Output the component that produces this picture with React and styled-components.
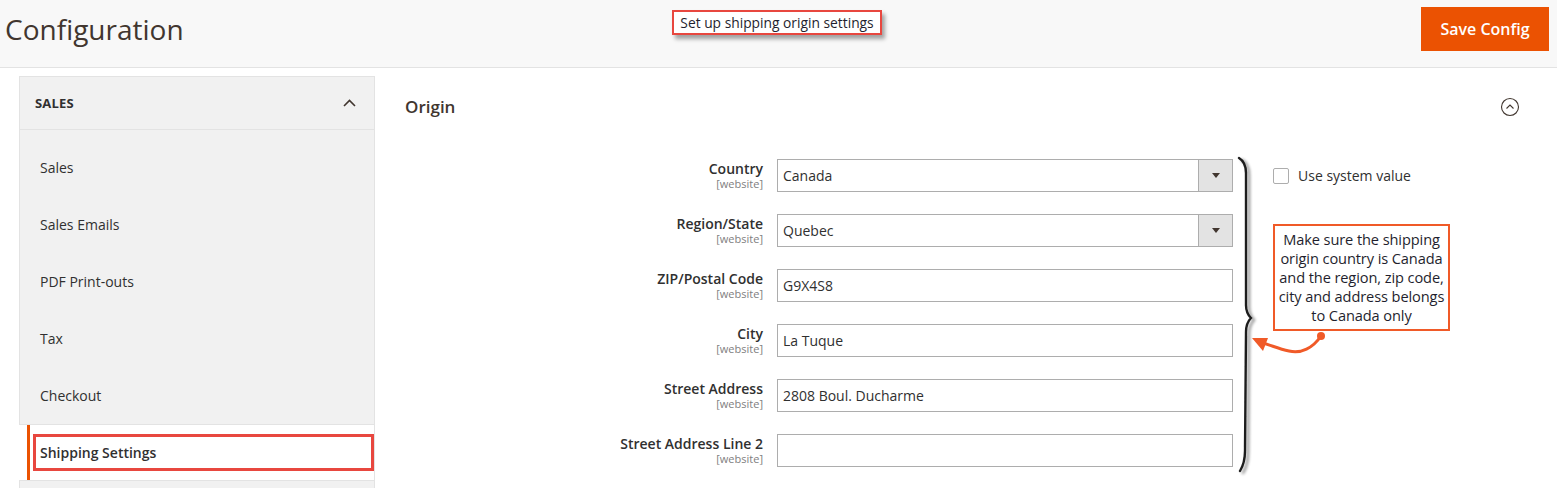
import React from "react";
import styled, { createGlobalStyle } from "styled-components";

const Global = createGlobalStyle`
  html, body { margin: 0; padding: 0; overflow: hidden; }
  body {
    font-family: "Open Sans", "Noto Sans", sans-serif;
    color: #303030;
    background: #ffffff;
  }
  #root { height: 488px; overflow: hidden; }
`;

const Header = styled.header`
  display: grid;
  grid-template-columns: 1fr auto 1fr;
  height: 67px;
  background: #f8f8f8;
  border-bottom: 1px solid #e3e3e3;
  padding: 0 8px 0 5px;
`;

const PageTitle = styled.h1`
  align-self: start;
  margin: 11px 0 0;
  font-size: 28px;
  font-weight: 400;
  color: #41362f;
  line-height: 36px;
`;

const Callout = styled.div`
  align-self: start;
  margin-top: 10px;
  background: #fff;
  border: 2.5px solid #e8473f;
  box-shadow: 3px 4px 4px rgba(0, 0, 0, 0.35);
  font-family: "Open Sans", sans-serif;
  font-size: 13.8px;
  line-height: 21px;
  color: #1f1f2e;
  padding: 0 6px;
  white-space: nowrap;
`;

const SaveButton = styled.button`
  justify-self: end;
  align-self: start;
  margin-top: 7px;
  width: 128px;
  height: 44px;
  border: none;
  background: #eb5202;
  color: #fff;
  font-family: "Open Sans", sans-serif;
  font-size: 16px;
  font-weight: 600;
  cursor: pointer;
`;

const Body = styled.div`
  display: grid;
  grid-template-columns: 356px minmax(0, 1fr);
  padding: 8px 0 0 19px;
`;

const Nav = styled.nav`
  display: flex;
  flex-direction: column;
`;

const NavTitle = styled.div`
  display: flex;
  align-items: center;
  justify-content: space-between;
  height: 52px;
  padding: 0 18px 0 15px;
  background: #f1f1f1;
  border: 1px solid #e3e3e3;
  font-size: 13px;
  font-weight: 700;
  color: #303030;
  letter-spacing: 0.2px;
`;

const NavList = styled.ul`
  list-style: none;
  margin: 0;
  padding: 9px 0 20px;
  background: #f1f1f1;
  border-left: 1px solid #e3e3e3;
  border-right: 1px solid #e3e3e3;
`;

const NavItem = styled.li`
  display: flex;
  height: ${(p) => (p.$active ? "55px" : "57px")};
  background: ${(p) => (p.$active ? "#ffffff" : "#f1f1f1")};
  margin-left: ${(p) => (p.$active ? "-1px" : "0")};
  border-top: ${(p) => (p.$active ? "1px solid #e3e3e3" : "none")};
  border-bottom: ${(p) => (p.$active ? "1px solid #e3e3e3" : "none")};
`;

const NavLink = styled.a`
  flex: 1;
  display: flex;
  align-items: center;
  margin-left: ${(p) => (p.$active ? "8px" : "7px")};
  border-left: 3px solid ${(p) => (p.$active ? "#eb5202" : "transparent")};
  padding-left: ${(p) => (p.$active ? "3px" : "10px")};
  font-size: 14px;
  font-weight: ${(p) => (p.$active ? 600 : 400)};
  color: #303030;
  text-decoration: none;
`;

const Highlight = styled.span`
  flex: 1;
  align-self: stretch;
  margin: 9px 0;
  display: flex;
  align-items: center;
  border: 3px solid #e8473f;
  padding-left: 4px;
`;

const Main = styled.main`
  padding: 0 37px 0 30px;
`;

const SectionHead = styled.div`
  display: flex;
  align-items: center;
  justify-content: space-between;
  padding-top: 20px;
  height: 22px;
`;

const SectionTitle = styled.h2`
  margin: 0;
  font-size: 17px;
  font-weight: 600;
  color: #41362f;
  line-height: 22px;
`;

const FormGrid = styled.div`
  display: grid;
  grid-template-columns: 358px 14px 456px 40px 1fr;
  grid-auto-rows: 33px;
  row-gap: 22px;
  margin-top: 41px;
`;

const LabelCell = styled.div`
  grid-column: 1;
  grid-row: ${(p) => p.$row};
  text-align: right;
  padding-top: 1px;
`;

const LabelText = styled.span`
  display: block;
  font-size: 14px;
  font-weight: 600;
  line-height: 17px;
  color: #303030;
`;

const Scope = styled.span`
  display: block;
  font-size: 11px;
  line-height: 13px;
  color: #808080;
`;

const FieldCell = styled.div`
  grid-column: 3;
  grid-row: ${(p) => p.$row};
  display: flex;
  border: 1px solid #adadad;
  background: #fff;
  box-sizing: border-box;
  height: 33px;
`;

const FieldValue = styled.span`
  flex: 1;
  display: flex;
  align-items: center;
  padding-left: 5px;
  font-size: 14px;
  color: #303030;
`;

const SelectArrow = styled.span`
  width: 33px;
  display: flex;
  align-items: center;
  justify-content: center;
  background: #e3e3e3;
  border-left: 1px solid #adadad;
  &::after {
    content: "";
    border-left: 4px solid transparent;
    border-right: 4px solid transparent;
    border-top: 5px solid #41362f;
  }
`;

const SystemValue = styled.label`
  grid-column: 5;
  grid-row: 1;
  display: flex;
  align-items: center;
  gap: 9px;
  font-size: 14px;
  color: #303030;
`;

const CheckBox = styled.span`
  width: 14px;
  height: 14px;
  border: 1px solid #adadad;
  border-radius: 2px;
  background: #fff;
`;

const Note = styled.div`
  grid-column: 5;
  grid-row: 2 / 5;
  align-self: start;
  justify-self: start;
  margin-top: 10px;
  width: 177px;
  box-sizing: border-box;
  border: 2px solid #f05a28;
  padding: 4px 0;
  text-align: center;
  font-family: "Open Sans", sans-serif;
  font-size: 14.6px;
  letter-spacing: -0.1px;
  line-height: 19px;
  color: #1f1f2e;
  background: #fff;
  white-space: nowrap;
`;

const Overlay = styled.svg`
  grid-column: 4 / 6;
  grid-row: 1 / 7;
  overflow: visible;
  pointer-events: none;
  z-index: 2;
`;

const fields = [
  { label: "Country", value: "Canada", select: true },
  { label: "Region/State", value: "Quebec", select: true },
  { label: "ZIP/Postal Code", value: "G9X4S8" },
  { label: "City", value: "La Tuque" },
  { label: "Street Address", value: "2808 Boul. Ducharme" },
  { label: "Street Address Line 2", value: "" },
];

const navItems = ["Sales", "Sales Emails", "PDF Print-outs", "Tax", "Checkout", "Shipping Settings"];

const noteLines = [
  "Make sure the shipping",
  "origin country is Canada",
  "and the region, zip code,",
  "city and address belongs",
  "to Canada only",
];

export default function App() {
  const activeIndex = 5;
  return (
    <>
      <Global />
      <Header>
        <PageTitle>Configuration</PageTitle>
        <Callout>Set up shipping origin settings</Callout>
        <SaveButton>Save Config</SaveButton>
      </Header>
      <Body>
        <Nav>
          <NavTitle>
            <span>SALES</span>
            <svg width="13" height="8" viewBox="0 0 13 8">
              <polyline points="1,7 6.5,1.5 12,7" fill="none" stroke="#41362f" strokeWidth="1.6" />
            </svg>
          </NavTitle>
          <NavList>
            {navItems.map((item, i) => (
              <NavItem key={item} $active={i === activeIndex}>
                <NavLink href="#" $active={i === activeIndex}>
                  {i === activeIndex ? <Highlight>{item}</Highlight> : item}
                </NavLink>
              </NavItem>
            ))}
          </NavList>
        </Nav>
        <Main>
          <SectionHead>
            <SectionTitle>Origin</SectionTitle>
            <svg width="20" height="20" viewBox="0 0 20 20">
              <circle cx="10" cy="10" r="8.5" fill="none" stroke="#41362f" strokeWidth="1.1" />
              <polyline points="6.5,11.5 10,8 13.5,11.5" fill="none" stroke="#41362f" strokeWidth="1.1" />
            </svg>
          </SectionHead>
          <FormGrid>
            {fields.map((f, i) => (
              <React.Fragment key={f.label}>
                <LabelCell $row={i + 1}>
                  <LabelText>{f.label}</LabelText>
                  <Scope>[website]</Scope>
                </LabelCell>
                <FieldCell $row={i + 1}>
                  <FieldValue>{f.value}</FieldValue>
                  {f.select && <SelectArrow />}
                </FieldCell>
              </React.Fragment>
            ))}
            <SystemValue>
              <CheckBox />
              Use system value
            </SystemValue>
            <Note>
              {noteLines.map((line, i) => (
                <React.Fragment key={line}>
                  {line}
                  {i < noteLines.length - 1 && <br />}
                </React.Fragment>
              ))}
            </Note>
            <Overlay width="100" height="308" viewBox="0 0 100 308">
              <defs>
                <filter id="braceShadow" x="-100%" y="-10%" width="300%" height="120%">
                  <feGaussianBlur in="SourceAlpha" stdDeviation="1.6" />
                  <feOffset dx="3" dy="2" result="b" />
                  <feComponentTransfer>
                    <feFuncA type="linear" slope="0.45" />
                  </feComponentTransfer>
                  <feMerge>
                    <feMergeNode />
                    <feMergeNode in="SourceGraphic" />
                  </feMerge>
                </filter>
              </defs>
              <path
                d="M6,-1 C11,2 13,6 13,14 L13,146 C13,153 15,156 18,159 C15,162 13,166 13,173 L12,292 C12,301 10,307 7,312"
                fill="none"
                stroke="#1e1e1e"
                strokeWidth="2.4"
                strokeLinecap="round"
                filter="url(#braceShadow)"
              />
              <path
                d="M88,177 C80,189 68,195 56,192 C46,190 40,187 30,184"
                fill="none"
                stroke="#f05a28"
                strokeWidth="3"
                strokeLinecap="round"
              />
              <circle cx="88" cy="177" r="4" fill="#f05a28" />
              <polygon points="19,179 35,179 30,192" fill="#f05a28" />
            </Overlay>
          </FormGrid>
        </Main>
      </Body>
    </>
  );
}
